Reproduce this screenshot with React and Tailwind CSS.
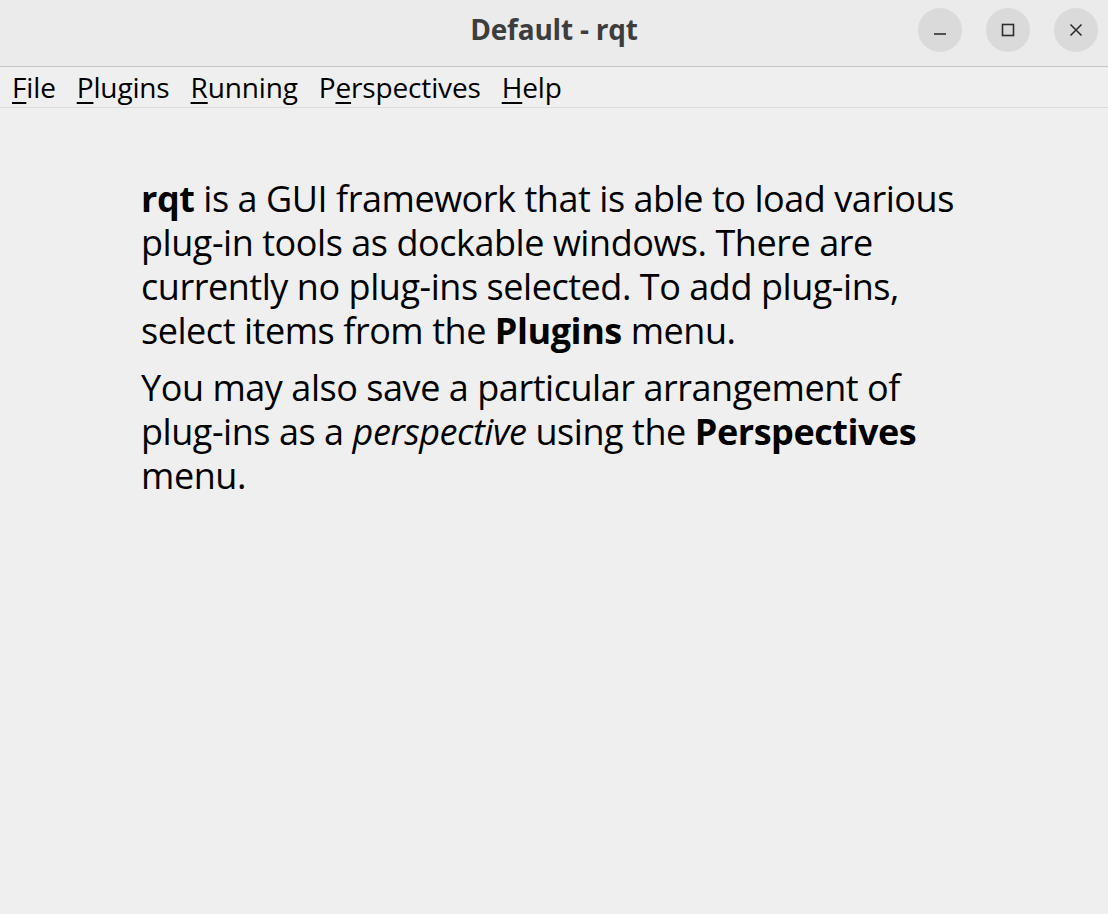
import React from 'react';

const font = { fontFamily: '"Open Sans", "Noto Sans", sans-serif' };

function MenuItem({ before = '', mnemonic, after }) {
  return (
    <span className="whitespace-pre">
      {before}
      <span className="underline decoration-[1.5px] underline-offset-[4px]">{mnemonic}</span>
      {after}
    </span>
  );
}

function WinButton({ children }) {
  return (
    <div className="w-[44px] h-[44px] rounded-full bg-[#dadada] flex items-center justify-center text-[#2e2e2e]">
      {children}
    </div>
  );
}

export default function App() {
  return (
    <div className="w-[1108px] h-[914px] bg-[#efefef] flex flex-col overflow-hidden" style={font}>
      {/* title bar */}
      <div className="relative h-[67px] bg-[#ebebeb] border-b border-[#c4c4c4] flex items-center justify-center shrink-0">
        <div className="text-[28px] font-bold text-[#3d3d3d] tracking-[-0.2px] -mt-[8px]">Default - rqt</div>
        <div className="absolute right-[10px] top-[8px] flex gap-[24px]">
          <WinButton>
            <svg width="16" height="16" viewBox="0 0 16 16"><path d="M2 12h12" stroke="currentColor" strokeWidth="1.6" /></svg>
          </WinButton>
          <WinButton>
            <svg width="16" height="16" viewBox="0 0 16 16"><rect x="2.5" y="2.5" width="11" height="11" fill="none" stroke="currentColor" strokeWidth="1.6" /></svg>
          </WinButton>
          <WinButton>
            <svg width="16" height="16" viewBox="0 0 16 16"><path d="M2.5 2.5l11 11M13.5 2.5l-11 11" stroke="currentColor" strokeWidth="1.6" /></svg>
          </WinButton>
        </div>
      </div>

      {/* menu bar */}
      <div className="h-[41px] border-b border-[#dcdcdc] flex items-center pl-[12px] gap-[21px] text-[28px] leading-[40px] text-black shrink-0 tracking-[-0.15px]">
        <MenuItem mnemonic="F" after="ile" />
        <MenuItem mnemonic="P" after="lugins" />
        <MenuItem mnemonic="R" after="unning" />
        <MenuItem before="P" mnemonic="e" after="rspectives" />
        <MenuItem mnemonic="H" after="elp" />
      </div>

      {/* body */}
      <div className="pl-[141px] pt-[69px] text-[36px] leading-[44px] text-black tracking-[-0.45px]">
        <p>
          <b>rqt</b> is a GUI framework that is able to load various<br />
          plug-in tools as dockable windows. There are<br />
          currently no plug-ins selected. To add plug-ins,<br />
          select items from the <b>Plugins</b> menu.
        </p>
        <p className="mt-[13px]">
          You may also save a particular arrangement of<br />
          plug-ins as a <i>perspective</i> using the <b>Perspectives</b><br />
          menu.
        </p>
      </div>
    </div>
  );
}
